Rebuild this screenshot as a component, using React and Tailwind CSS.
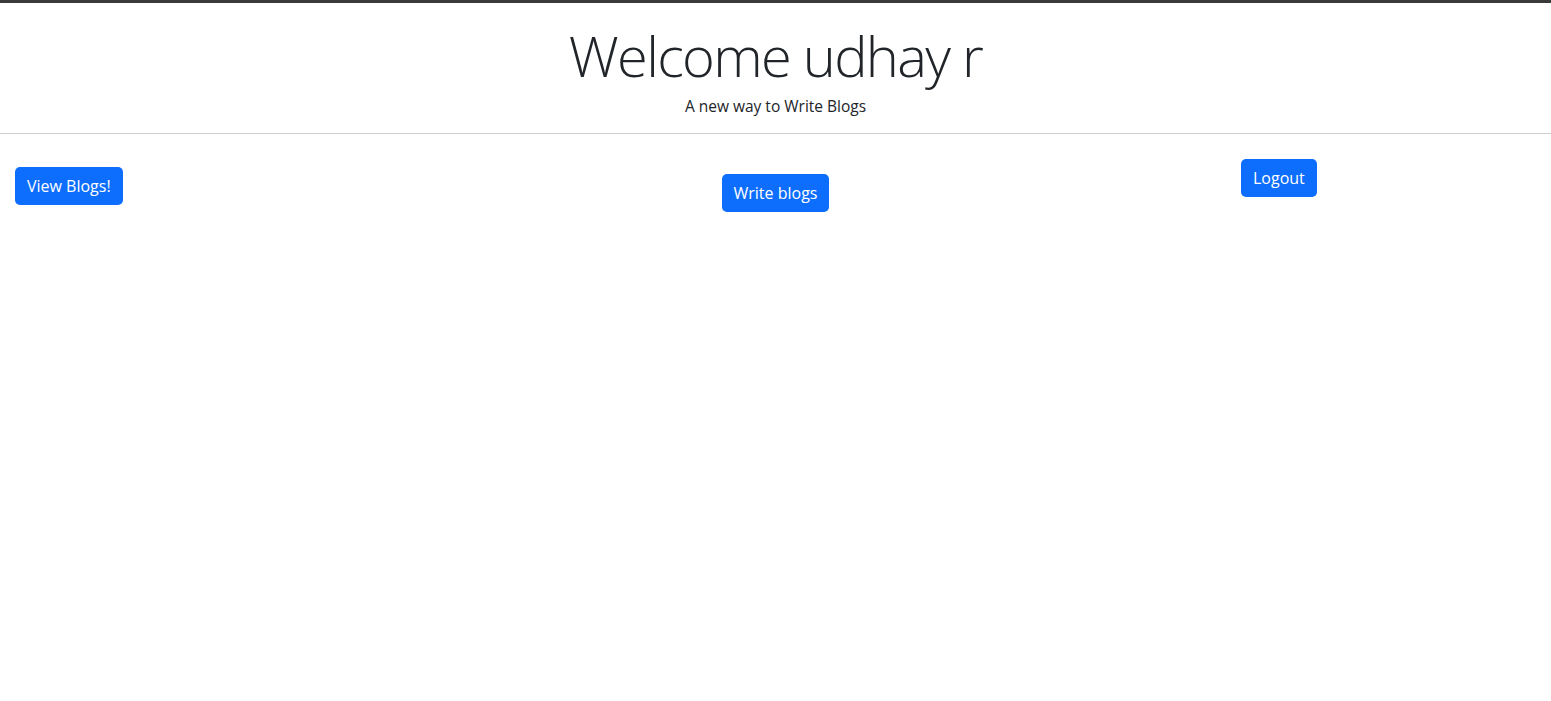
export default function App() {
  return (
    <div className="min-h-screen bg-white text-[#212529]" style={{ fontFamily: '"Open Sans", "Liberation Sans", sans-serif' }}>
      <div className="h-[3px] bg-[#3a3a3a]" />
      <header className="text-center pt-[19px]">
        <h1 className="text-[56px] font-light leading-[1.2] tracking-[-1.7px]">Welcome udhay r</h1>
        <p className="text-[15.5px] mt-[6px]">A new way to Write Blogs</p>
      </header>
      <hr className="mt-[15px] border-t border-[#cfcfcf]" />
      <div className="grid grid-cols-3 items-start">
        <div className="pl-[15px] pt-[33px]">
          <button className="bg-[#0d6efd] text-white text-[16px] px-[12px] h-[38px] rounded-[5px]">View Blogs!</button>
        </div>
        <div className="flex justify-center pt-[40px]">
          <button className="bg-[#0d6efd] text-white text-[16px] px-[12px] h-[38px] rounded-[5px]">Write blogs</button>
        </div>
        <div className="pl-[207px] pt-[25px]">
          <button className="bg-[#0d6efd] text-white text-[16px] px-[12px] h-[38px] rounded-[5px]">Logout</button>
        </div>
      </div>
    </div>
  );
}
